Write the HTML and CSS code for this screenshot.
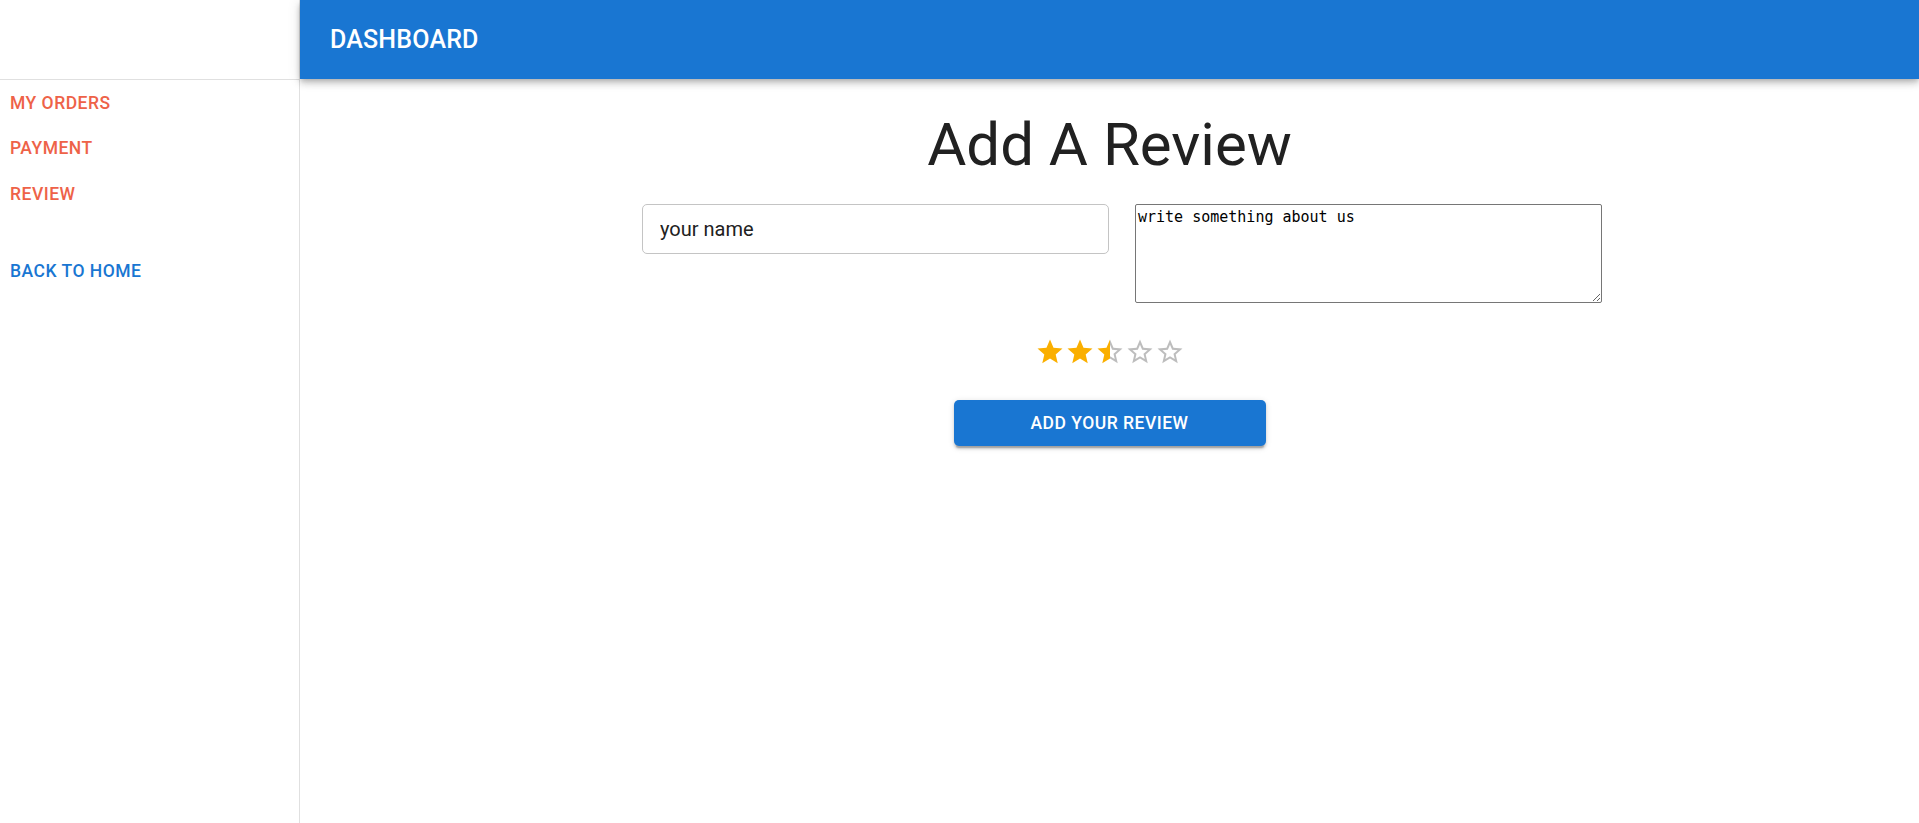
FILE: index.html
```html
<!DOCTYPE html>
<html lang="en">
<head>
<meta charset="utf-8">
<title>Dashboard - Add A Review</title>
<link rel="stylesheet" href="styles.css">
</head>
<body>
<div class="layout">
  <aside class="sidebar">
    <div class="sidebar-top"></div>
    <div class="divider"></div>
    <nav class="nav">
      <a class="nav-btn accent" href="#">My Orders</a>
      <a class="nav-btn accent" href="#">Payment</a>
      <a class="nav-btn accent" href="#">Review</a>
      <a class="nav-btn primary home" href="#">Back to Home</a>
    </nav>
  </aside>
  <div class="main-col">
    <header class="appbar">
      <h1 class="appbar-title">DASHBOARD</h1>
    </header>
    <main class="content">
      <h2 class="title">Add A Review</h2>
      <form class="review-form">
        <div class="fields">
          <input class="name-input" type="text" value="your name">
          <textarea class="msg-input">write something about us</textarea>
        </div>
        <div class="rating" aria-label="2.5 stars">
          <svg class="star" viewBox="0 0 24 24"><path class="fill" d="M12 17.27L18.18 21l-1.64-7.03L22 9.24l-7.19-.61L12 2 9.19 8.63 2 9.24l5.46 4.73L5.82 21z"/></svg>
          <svg class="star" viewBox="0 0 24 24"><path class="fill" d="M12 17.27L18.18 21l-1.64-7.03L22 9.24l-7.19-.61L12 2 9.19 8.63 2 9.24l5.46 4.73L5.82 21z"/></svg>
          <svg class="star" viewBox="0 0 24 24">
            <defs><clipPath id="lefthalf"><rect x="0" y="0" width="12" height="24"/></clipPath><clipPath id="righthalf"><rect x="12" y="0" width="12" height="24"/></clipPath></defs>
            <path class="empty" clip-path="url(#righthalf)" d="M22 9.24l-7.19-.62L12 2 9.19 8.63 2 9.24l5.46 4.73L5.82 21 12 17.27 18.18 21l-1.63-7.03L22 9.24zM12 15.4l-3.76 2.27 1-4.28-3.32-2.88 4.38-.38L12 6.1l1.71 4.04 4.38.38-3.32 2.88 1 4.28L12 15.4z"/>
            <path class="fill" clip-path="url(#lefthalf)" d="M12 17.27L18.18 21l-1.64-7.03L22 9.24l-7.19-.61L12 2 9.19 8.63 2 9.24l5.46 4.73L5.82 21z"/>
          </svg>
          <svg class="star" viewBox="0 0 24 24"><path class="empty" d="M22 9.24l-7.19-.62L12 2 9.19 8.63 2 9.24l5.46 4.73L5.82 21 12 17.27 18.18 21l-1.63-7.03L22 9.24zM12 15.4l-3.76 2.27 1-4.28-3.32-2.880 4.38-.38L12 6.1l1.71 4.04 4.38.38-3.32 2.88 1 4.28L12 15.4z"/></svg>
          <svg class="star" viewBox="0 0 24 24"><path class="empty" d="M22 9.24l-7.19-.62L12 2 9.19 8.63 2 9.24l5.46 4.73L5.82 21 12 17.27 18.18 21l-1.63-7.03L22 9.24zM12 15.4l-3.76 2.27 1-4.28-3.32-2.88 4.38-.38L12 6.1l1.71 4.04 4.38.38-3.32 2.88 1 4.28L12 15.4z"/></svg>
        </div>
        <button class="submit-btn" type="button">Add Your Review</button>
      </form>
    </main>
  </div>
</div>
</body>
</html>
```

FILE: styles.css
```css
* {
  box-sizing: border-box;
}

html, body {
  margin: 0;
  padding: 0;
  height: 100%;
  background: #ffffff;
  font-family: Roboto, "Liberation Sans", Arial, sans-serif;
}

.layout {
  display: flex;
  min-height: 823px;
}

.sidebar {
  width: 300px;
  flex-shrink: 0;
  border-right: 1px solid #e0e0e0;
  display: flex;
  flex-direction: column;
}

.sidebar-top {
  height: 79px;
}

.divider {
  height: 1px;
  background: #e0e0e0;
}

.nav {
  display: flex;
  flex-direction: column;
  align-items: flex-start;
}

.nav-btn {
  display: inline-block;
  padding: 7.5px 10px;
  font-size: 17.5px;
  font-weight: 500;
  line-height: 1.75;
  letter-spacing: 0.5px;
  text-transform: uppercase;
  text-decoration: none;
}

.nav-btn.accent {
  color: #ee6248;
}

.nav-btn.primary {
  color: #1976d2;
}

.nav-btn.home {
  margin-top: 31.5px;
}

.main-col {
  flex: 1;
  display: flex;
  flex-direction: column;
}

.appbar {
  position: relative;
  z-index: 2;
  height: 79px;
  background: #1976d2;
  display: flex;
  align-items: center;
  padding: 0 30px;
  box-shadow: 0 2.5px 5px -1.25px rgba(0, 0, 0, 0.2), 0 5px 6.25px 0 rgba(0, 0, 0, 0.14), 0 1.25px 12.5px 0 rgba(0, 0, 0, 0.12);
}

.appbar-title {
  margin: 0;
  color: #ffffff;
  font-size: 25px;
  font-weight: 500;
  line-height: 1.6;
  letter-spacing: 0.19px;
}

.content {
  padding: 31px 30px 30px;
  display: flex;
  flex-direction: column;
  align-items: center;
}

.title {
  margin: 0;
  font-size: 60px;
  font-weight: 400;
  line-height: 1.167;
  color: #212121;
}

.review-form {
  display: flex;
  flex-direction: column;
  align-items: center;
  align-self: stretch;
}

.fields {
  margin-top: 24px;
  align-self: stretch;
  display: flex;
  justify-content: center;
  align-items: flex-start;
  gap: 26px;
  padding-left: 25px;
}

.name-input {
  width: 467px;
  height: 50px;
  border: 1px solid #c4c4c4;
  border-radius: 5px;
  padding: 0 17px;
  font-family: Roboto, "Liberation Sans", sans-serif;
  font-size: 20px;
  color: #212121;
  background: #ffffff;
  outline: none;
}

.msg-input {
  width: 467px;
  height: 99px;
  border: 1px solid #767676;
  border-radius: 2px;
  padding: 3px 2px;
  font-family: "DejaVu Sans Mono", "Liberation Mono", monospace;
  font-size: 15px;
  line-height: 1.2;
  color: #000000;
  background: #ffffff;
  resize: both;
}

.rating {
  margin-top: 34px;
  display: flex;
  height: 30px;
}

.star {
  width: 30px;
  height: 30px;
  display: block;
}

.star .fill {
  fill: #faaf00;
}

.star .empty {
  fill: rgba(0, 0, 0, 0.26);
}

.submit-btn {
  margin-top: 33px;
  width: 312px;
  height: 46px;
  border: 0;
  border-radius: 5px;
  background: #1976d2;
  color: #ffffff;
  font-family: Roboto, "Liberation Sans", sans-serif;
  font-size: 17.5px;
  font-weight: 500;
  line-height: 1.75;
  letter-spacing: 0.5px;
  text-transform: uppercase;
  cursor: pointer;
  box-shadow: 0 3.75px 1.25px -2.5px rgba(0, 0, 0, 0.2), 0 2.5px 2.5px 0 rgba(0, 0, 0, 0.14), 0 1.25px 6.25px 0 rgba(0, 0, 0, 0.12);
}
```
